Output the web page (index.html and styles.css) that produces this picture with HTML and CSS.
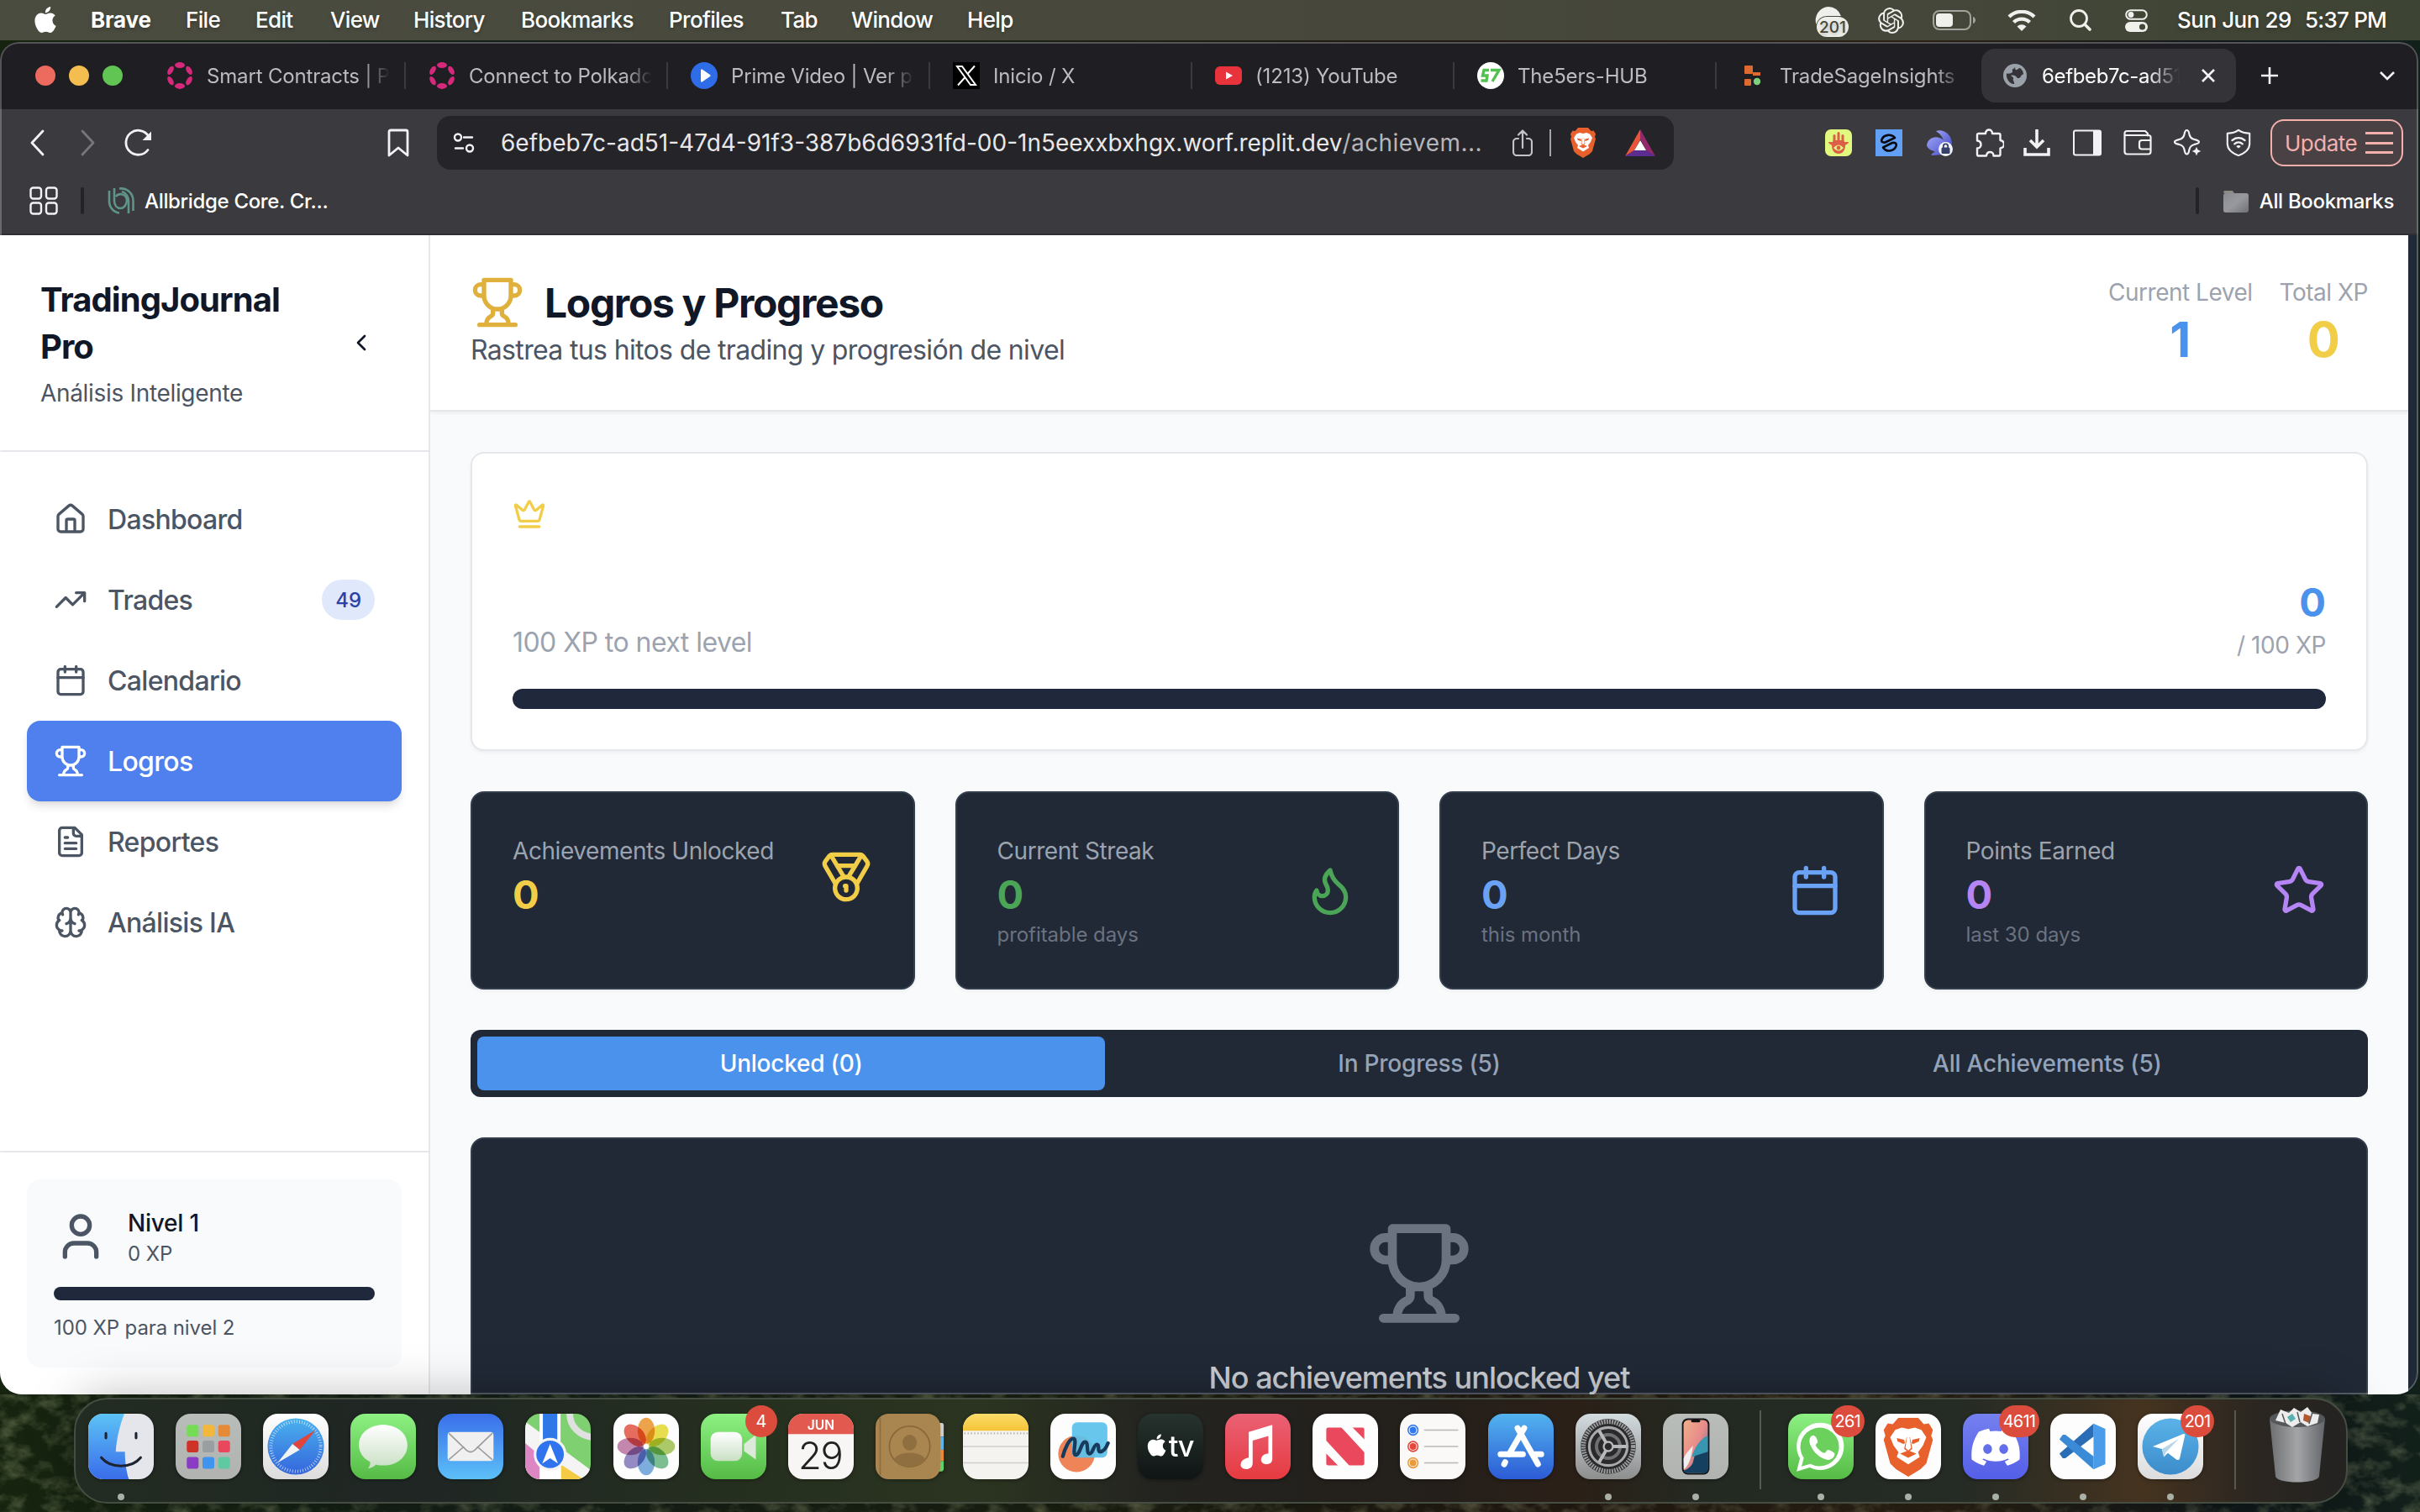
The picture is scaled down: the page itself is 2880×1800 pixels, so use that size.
FILE: index.html
```html
<!DOCTYPE html>
<html lang="es">
<head>
<meta charset="utf-8">
<title>Logros y Progreso</title>
<link rel="stylesheet" href="styles.css">
</head>
<body>
<svg class="defs" aria-hidden="true">
  <defs>
    <linearGradient id="g-finder" x1="0" y1="0" x2="0" y2="1"><stop offset="0" stop-color="#5cc3f5"/><stop offset="1" stop-color="#3a6cea"/></linearGradient>
    <linearGradient id="g-white" x1="0" y1="0" x2="0" y2="1"><stop offset="0" stop-color="#ffffff"/><stop offset="1" stop-color="#dcdcdc"/></linearGradient>
    <linearGradient id="g-safari" x1="0" y1="0" x2="0" y2="1"><stop offset="0" stop-color="#4ab1ee"/><stop offset="1" stop-color="#3465dc"/></linearGradient>
    <linearGradient id="g-green" x1="0" y1="0" x2="0" y2="1"><stop offset="0" stop-color="#8df183"/><stop offset="1" stop-color="#55bb45"/></linearGradient>
    <linearGradient id="g-bubble" x1="0" y1="0" x2="0" y2="1"><stop offset="0" stop-color="#ffffff"/><stop offset="1" stop-color="#c9dfc4"/></linearGradient>
    <linearGradient id="g-mail" x1="0" y1="0" x2="0" y2="1"><stop offset="0" stop-color="#3a6fea"/><stop offset="1" stop-color="#5cc0f8"/></linearGradient>
    <linearGradient id="g-red" x1="0" y1="0" x2="0" y2="1"><stop offset="0" stop-color="#ea6175"/><stop offset="1" stop-color="#e63a40"/></linearGradient>
    <linearGradient id="g-store" x1="0" y1="0" x2="0" y2="1"><stop offset="0" stop-color="#52b3ee"/><stop offset="1" stop-color="#2c5bd6"/></linearGradient>
    <linearGradient id="g-tv" x1="0" y1="0" x2="0" y2="1"><stop offset="0" stop-color="#27332f"/><stop offset="1" stop-color="#0f1414"/></linearGradient>
    <linearGradient id="g-gray" x1="0" y1="0" x2="0" y2="1"><stop offset="0" stop-color="#b9bdb9"/><stop offset="1" stop-color="#b0b3b0"/></linearGradient>
    <linearGradient id="g-set" x1="0" y1="0" x2="0" y2="1"><stop offset="0" stop-color="#d3dce0"/><stop offset="1" stop-color="#8d8d8d"/></linearGradient>
    <linearGradient id="g-tg" x1="0" y1="0" x2="0" y2="1"><stop offset="0" stop-color="#5ab3e8"/><stop offset="1" stop-color="#3c8ccb"/></linearGradient>
    <linearGradient id="g-brave" x1="0" y1="0" x2="1" y2="0"><stop offset="0" stop-color="#e0713a"/><stop offset="1" stop-color="#d9472f"/></linearGradient>
    <linearGradient id="g-disc" x1="0" y1="0" x2="0" y2="1"><stop offset="0" stop-color="#7580ef"/><stop offset="1" stop-color="#545fe8"/></linearGradient>
    <linearGradient id="g-notes" x1="0" y1="0" x2="0" y2="1"><stop offset="0" stop-color="#fbdc68"/><stop offset="1" stop-color="#f5c437"/></linearGradient>
    <linearGradient id="g-trash" x1="0" y1="0" x2="1" y2="0"><stop offset="0" stop-color="#6c6e70"/><stop offset=".5" stop-color="#a3a5a7"/><stop offset="1" stop-color="#63666a"/></linearGradient>
    <linearGradient id="g-bunny" x1="0" y1="0" x2="1" y2="1"><stop offset="0" stop-color="#9aa0f5"/><stop offset="1" stop-color="#4a50c8"/></linearGradient>
    <linearGradient id="g-phone" x1="0" y1="0" x2="1" y2="1"><stop offset="0" stop-color="#f0b08a"/><stop offset=".5" stop-color="#e88a8a"/><stop offset="1" stop-color="#2a7a96"/></linearGradient>
    <linearGradient id="g-folder" x1="0" y1="0" x2="1" y2="1"><stop offset="0" stop-color="#8b8c91"/><stop offset=".5" stop-color="#98999e"/><stop offset="1" stop-color="#707176"/></linearGradient>
    <clipPath id="clip-app"><rect width="100" height="100" rx="23"/></clipPath>
    <filter id="foliage" x="0" y="0" width="100%" height="100%"><feTurbulence type="fractalNoise" baseFrequency=".035 .05" numOctaves="4" seed="7"/><feColorMatrix values="0 0 0 0 .38  0 0 0 0 .42  0 0 0 0 .22  1.9 0 0 0 -.85"/></filter>
    <symbol id="trophy" viewBox="0 0 24 24"><path d="M6 9H4.5a2.5 2.5 0 0 1 0-5H6M18 9h1.5a2.5 2.5 0 0 0 0-5H18M4 22h16M10 14.66V17c0 .55-.47.98-.97 1.21C7.85 18.75 7 20.24 7 22M14 14.66V17c0 .55.47.98.97 1.21C16.15 18.75 17 20.24 17 22M18 2H6v7a6 6 0 0 0 12 0V2Z"/></symbol>
    <symbol id="calendar" viewBox="0 0 24 24"><path d="M8 2v4M16 2v4M3 10h18"/><rect x="3" y="4" width="18" height="18" rx="2"/></symbol>
    <symbol id="apple" viewBox="0 0 24 24"><path d="M12.152 6.896c-.948 0-2.415-1.078-3.96-1.04-2.04.027-3.91 1.183-4.961 3.014-2.117 3.675-.546 9.103 1.519 12.09 1.013 1.454 2.208 3.09 3.792 3.039 1.52-.065 2.09-.987 3.935-.987 1.831 0 2.35.987 3.96.948 1.637-.026 2.676-1.48 3.676-2.948 1.156-1.688 1.636-3.325 1.662-3.415-.039-.013-3.182-1.221-3.22-4.857-.026-3.04 2.48-4.494 2.597-4.559-1.429-2.09-3.623-2.324-4.39-2.376-2-.156-3.675 1.09-4.61 1.09zM15.53 3.83c.843-1.012 1.4-2.427 1.245-3.83-1.207.052-2.662.805-3.532 1.818-.78.896-1.454 2.338-1.273 3.714 1.338.104 2.715-.688 3.559-1.701"/></symbol>
    <symbol id="polkadot" viewBox="0 0 32 32"><g fill="#d6297b"><ellipse cx="16" cy="3.6" rx="6" ry="3.5"/><ellipse cx="16" cy="28.4" rx="6" ry="3.5"/><ellipse cx="5" cy="9.8" rx="3" ry="5.6" transform="rotate(30 5 9.8)"/><ellipse cx="27" cy="22.2" rx="3" ry="5.6" transform="rotate(30 27 22.2)"/><ellipse cx="27" cy="9.8" rx="3" ry="5.6" transform="rotate(-30 27 9.8)"/><ellipse cx="5" cy="22.2" rx="3" ry="5.6" transform="rotate(-30 5 22.2)"/></g></symbol>
    <symbol id="lion" viewBox="0 0 64 72"><path class="lion-shape" d="M20 0h24l7 8 6-1 5 8-2 7 2 5-8 29-7 7-15 9-15-9-7-7L2 27l2-5-2-7 5-8 6 1z"/><path fill="#fff" d="M32 14l8-2 8 3 6 9-4 10-6 8 2 6-14 9-14-9 2-6-6-8-4-10 6-9 8-3z"/><path class="lion-shape" d="M18 25l9 2 1 4-2 1-7-3zM46 25l-9 2-1 4 2 1 7-3zM30 24h4l3 14-5 4-5-4zM22 44l10-4 10 4-10 5z"/><path fill="#fff" d="M30.500 24h3l2 13-3.500 3-3.500-3z"/></symbol>
  </defs>
</svg>

<header class="menubar">
  <svg class="menubar-apple" viewBox="0 0 24 24"><use href="#apple"/></svg>
  <nav class="menus">
    <b>Brave</b><span>File</span><span>Edit</span><span>View</span><span>History</span><span>Bookmarks</span><span>Profiles</span><span>Tab</span><span>Window</span><span>Help</span>
  </nav>
  <div class="status">
    <svg class="st-badge" viewBox="0 0 40 36"><path d="M16 0a16 16 0 0 1 15 11H14A13 13 0 0 0 1.500 21 16 16 0 0 1 16 0z"/><rect x="2" y="12" width="38" height="24" rx="12"/><text x="21" y="30.500">201</text></svg>
    <svg class="st-gpt" viewBox="0 0 24 24"><path d="M22.2819 9.8211a5.9847 5.9847 0 0 0-.5157-4.9108 6.0462 6.0462 0 0 0-6.5098-2.9A6.0651 6.0651 0 0 0 4.9807 4.1818a5.9847 5.9847 0 0 0-3.9977 2.9 6.0462 6.0462 0 0 0 .7427 7.0966 5.98 5.98 0 0 0 .511 4.9107 6.051 6.051 0 0 0 6.5146 2.9001A5.9847 5.9847 0 0 0 13.2599 24a6.0557 6.0557 0 0 0 5.7718-4.2058 5.9894 5.9894 0 0 0 3.9977-2.9001 6.0557 6.0557 0 0 0-.7475-7.0729zm-9.022 12.6081a4.4755 4.4755 0 0 1-2.8764-1.0408l.1419-.0804 4.7783-2.7582a.7948.7948 0 0 0 .3927-.6813v-6.7369l2.02 1.1686a.071.071 0 0 1 .038.052v5.5826a4.504 4.504 0 0 1-4.4945 4.4944zm-9.6607-4.1254a4.4708 4.4708 0 0 1-.5346-3.0137l.142.0852 4.783 2.7582a.7712.7712 0 0 0 .7806 0l5.8428-3.3685v2.3324a.0804.0804 0 0 1-.0332.0615L9.74 19.9502a4.4992 4.4992 0 0 1-6.1408-1.6464zM2.3408 7.8956a4.485 4.485 0 0 1 2.3655-1.9728V11.6a.7664.7664 0 0 0 .3879.6765l5.8144 3.3543-2.0201 1.1685a.0757.0757 0 0 1-.071 0l-4.8303-2.7865A4.504 4.504 0 0 1 2.3408 7.872zm16.5963 3.8558L13.1038 8.364 15.1192 7.2a.0757.0757 0 0 1 .071 0l4.8303 2.7913a4.4944 4.4944 0 0 1-.6765 8.1042v-5.6772a.79.79 0 0 0-.407-.667zm2.0107-3.0231l-.142-.0852-4.7735-2.7818a.7759.7759 0 0 0-.7854 0L9.409 9.2297V6.8974a.0662.0662 0 0 1 .0284-.0615l4.8303-2.7866a4.4992 4.4992 0 0 1 6.6802 4.66zM8.3065 12.863l-2.02-1.1638a.0804.0804 0 0 1-.038-.0567V6.0742a4.4992 4.4992 0 0 1 7.3757-3.4537l-.142.0805L8.704 5.459a.7948.7948 0 0 0-.3927.6813zm1.0976-2.3654l2.602-1.4998 2.6069 1.4998v2.9994l-2.5974 1.4997-2.6067-1.4997Z"/></svg>
    <svg class="st-batt" viewBox="0 0 51 24"><rect x="1" y="1" width="44" height="22" rx="7" fill="none" stroke="#fff" stroke-opacity=".5" stroke-width="2"/><rect x="4" y="4" width="20" height="16" rx="4"/><path d="M48 8c4 1 4 7 0 8z" opacity=".55"/></svg>
    <svg class="st-wifi" viewBox="0 0 34 25"><path d="M17 25l-5.500-5.500a8 8 0 0 1 11 0z"/><path d="M7.500 14.500a13.500 13.500 0 0 1 19 0M2 8a21.500 21.500 0 0 1 30 0" fill="none" stroke="#efefec" stroke-width="4.400"/></svg>
    <svg class="st-search" viewBox="0 0 26 26"><g fill="none" stroke="#efefec" stroke-width="2.800" stroke-linecap="round"><circle cx="11" cy="11" r="9.500"/><path d="M18 18l6 6" stroke-width="3.600"/></g></svg>
    <svg class="st-cc" viewBox="0 0 27 27"><rect x="1.200" y="1.200" width="24.600" height="10.600" rx="5.300" fill="none" stroke="#efefec" stroke-width="2"/><circle cx="7" cy="6.500" r="3.400"/><rect y="15" width="27" height="12" rx="6"/><circle cx="20.500" cy="21" r="3.600" fill="#434738"/></svg>
    <span class="st-date">Sun Jun 29</span><span class="st-time">5:37 PM</span>
  </div>
</header>

<main class="window">
  <div class="tabstrip">
    <div class="lights"><i class="red"></i><i class="amber"></i><i class="green"></i></div>
    <div class="tab"><svg viewBox="0 0 32 32"><use href="#polkadot"/></svg><span>Smart Contracts | P</span></div>
    <div class="tab"><svg viewBox="0 0 32 32"><use href="#polkadot"/></svg><span>Connect to Polkadc</span></div>
    <div class="tab"><svg viewBox="0 0 32 32"><circle cx="16" cy="16" r="16" fill="#2f6ce8"/><path d="M12 9.500c0-1 .8-1.400 1.600-.9L23 15c.8.600.8 1.500 0 2l-9.400 6.500c-.8.500-1.600 0-1.600-.900z" fill="#fff"/></svg><span>Prime Video | Ver p</span></div>
    <div class="tab"><svg viewBox="0 0 32 32"><path fill="#000" d="M0 0h32v32H0z"/><path fill="none" stroke="#fff" stroke-width="2" d="M5 5h6l16 22h-6zM26 4.500L17.500 14M14.500 18L6 27.500"/></svg><span>Inicio / X</span></div>
    <div class="tab"><svg viewBox="0 0 32 32"><rect x="0" y="5" width="32" height="22" rx="6" fill="#e8333c"/><path d="M13 11.500l8 4.500-8 4.500z" fill="#fff"/></svg><span>(1213) YouTube</span></div>
    <div class="tab"><svg viewBox="0 0 32 32"><circle cx="16" cy="16" r="16" fill="#fff"/><path d="M14 9.500H8L6.500 16H12l-1 6H4.500M16 9.500h10L18 23" fill="none" stroke="#52c152" stroke-width="3.400"/></svg><span>The5ers-HUB</span></div>
    <div class="tab last"><svg viewBox="0 0 32 32"><g fill="#dd6a30"><rect x="6" y="4" width="10" height="10" rx="1"/><rect x="16" y="12" width="9" height="4"/><rect x="6" y="20" width="8" height="8" rx="1"/></g><circle cx="21" cy="23" r="4.200" fill="#7ed07c"/></svg><span>TradeSageInsights</span></div>
    <div class="tab active"><svg viewBox="0 0 28 28"><circle cx="14" cy="14" r="14" fill="#9ba1a8"/><path d="M14 4c-1 2-4 2-3 4.500S7 12 4 11.500C3 17 7 24 13 24c1-2-2-4-1-6s-2-3-3-4c3-1 6 0 7 2s4 1 5-1 2-3 3-2c0-3-1-6-4-8-2 0-3 3-5 2s0-2-1-3z" fill="#343338"/></svg><span>6efbeb7c-ad51</span><svg class="close" viewBox="0 0 16 16"><path d="M1 1l14 14M15 1L1 15"/></svg></div>
    <svg class="plus" viewBox="0 0 22 22"><path d="M11 1v20M1 11h20"/></svg>
    <svg class="chev" viewBox="0 0 20 12"><path d="M2 2l8 8 8-8"/></svg>
  </div>

  <div class="toolbar">
    <svg class="ic back" viewBox="0 0 18 32"><path d="M16 2L3 16l13 14"/></svg>
    <svg class="ic fwd" viewBox="0 0 18 32"><path d="M2 2l13 14L2 30"/></svg>
    <svg class="ic reload" viewBox="0 0 36 34"><path d="M29 25.500A14.500 14.500 0 1 1 30 9.500"/><path d="M33 3.500V14H22.500z" fill="#f2f2f4" stroke="none"/></svg>
    <svg class="ic bm" viewBox="0 0 26 34"><path d="M2 4a2 2 0 0 1 2-2h18a2 2 0 0 1 2 2v28l-11-9-11 9z"/></svg>
    <div class="urlbar">
      <svg class="ic tune" viewBox="0 0 26 24"><g stroke-width="2.400"><circle cx="6" cy="5.500" r="4"/><path d="M13 5.500h10M3 18.500h9"/><circle cx="20" cy="18.500" r="4"/></g></svg>
      <span class="url">6efbeb7c-ad51-47d4-91f3-387b6d6931fd-00-1n5eexxbxhgx.worf.replit.dev<em>/achievem...</em></span>
      <svg class="ic share" viewBox="0 0 24 32"><path d="M7 11H5a4 4 0 0 0-4 4v12a4 4 0 0 0 4 4h14a4 4 0 0 0 4-4V15a4 4 0 0 0-4-4h-2M12 22V2M7 6.500L12 1.500l5 5"/></svg>
      <i class="sep"></i>
      <svg class="lion" viewBox="0 0 64 72"><use href="#lion"/></svg>
      <svg class="bat" viewBox="0 0 36 32"><path d="M18 0L0 32l11-7 7-13z" fill="#e8553a"/><path d="M18 0l18 32-11-7-7-13z" fill="#93296b"/><path d="M0 32h36l-11-7H11z" fill="#5c2d91"/><path d="M18 13l7 12H11z" fill="#fff"/></svg>
    </div>
    <div class="exts">
      <span><svg viewBox="0 0 32 32"><rect width="32" height="32" rx="7" fill="#e1f97f"/><g fill="#dc5f48"><rect x="9.500" y="6" width="3" height="10" rx="1.500"/><rect x="14.500" y="3" width="3" height="12" rx="1.500"/><rect x="19.500" y="6" width="3" height="10" rx="1.500"/><path d="M4 15h5l1-2h12l1 2h5c0 2-3 3-4 4 0 6-3 10-8 10s-8-4-8-10c-1-1-4-2-4-4z"/></g><path d="M10 22q6-7 12 0-6 7-12 0z" fill="#e1f97f"/><circle cx="16" cy="22" r="2.400" fill="#dc5f48"/></svg></span>
      <span><svg viewBox="0 0 32 32"><path fill="#62a0f5" d="M0 0h32v32H0z"/><path d="M23 10C19 5 10 6 7.500 12c-1 3 1 4 4 3.500zM9 21.500C13 28 22 26 24.500 20c1-3.500-1-4.500-4.500-4z" fill="none" stroke="#0a0a12" stroke-width="2.600" stroke-linejoin="round"/></svg></span>
      <span><svg viewBox="0 0 32 32"><path d="M12 2C19-1 30 4 31 16l-1 4-9-6C20 8 16 5 12 2z" fill="url(#g-bunny)"/><path d="M1 19C2 10 12 6 20 12l8 8-8 10-12 1c-3 0-1-3 3-4-3-2-9-3-10-8z" fill="url(#g-bunny)"/><circle cx="23.500" cy="23.500" r="8.500" fill="#f1f3f8"/><rect x="18.500" y="21.500" width="10" height="7.500" rx="1.500" fill="#36406a"/><path d="M20.800 22v-2a2.700 2.700 0 0 1 5.400 0v2" fill="none" stroke="#36406a" stroke-width="1.800"/></svg></span>
      <span><svg class="ic wide" viewBox="0 0 34 34"><path d="M4 6h8c0-6 8-6 8 0h8a1.500 1.500 0 0 1 1.500 1.500V14c6 1 6 8.500 0 9.500V31a1.500 1.500 0 0 1-1.500 1.500h-6.500c0-6-8-6-8.500 0H4A1.500 1.500 0 0 1 2 31v-7.500c6 0 6-8.500 0-9V7.500A1.500 1.500 0 0 1 4 6z" stroke-width="2.400"/></svg></span>
      <span class="dl"><svg viewBox="0 0 32 32"><path d="M16 0v20M8 13l8 8 8-8M2 22v8h28v-8" fill="none" stroke="#f2f2f4" stroke-width="3.600"/></svg></span>
      <span><svg class="wide" viewBox="0 0 34 31"><rect x="1" y="1" width="32" height="29" rx="2" fill="none" stroke="#f2f2f4" stroke-width="2"/><path fill="#f2f2f4" d="M24 1h9v29h-9z"/></svg></span>
      <span><svg class="ic wide" viewBox="0 0 34 31"><path d="M29 7V4.500L26 1.500H4a2.500 2.500 0 0 0-2.500 2.500v22A3 3 0 0 0 4.500 29h25a3 3 0 0 0 3-3V9a2.500 2.500 0 0 0-2.500-2.500H2M32 12.500H22a3 3 0 0 0-3 3V20a3 3 0 0 0 3 3h10" stroke-width="2.200"/></svg></span>
      <span><svg class="ic wide" viewBox="0 0 34 34"><path d="M15.500 2c1.800 0 2.500 2 3 5 .7 3.500 2 5 6 6 3 .7 5.500 1.200 5.500 3s-2.500 2.300-5.500 3c-4 1-5.300 2.500-6 6-.5 3-1.200 5.500-3 5.500s-2.500-2.500-3-5.500c-.7-3.500-2-5-6-6-3-.7-5.500-1.200-5.500-3s2.500-2.300 5.500-3c4-1 5.300-2.500 6-6 .5-3 1.200-5 3-5z" stroke-width="2.200"/><path d="M27 20l2 4.500 5 2.500-5 2.500-2 5-2-5-5-2.500 5-2.500z" fill="#f2f2f4" stroke="#3b3a3f" stroke-width="1.500"/></svg></span>
      <span><svg class="ic wide" viewBox="0 0 34 36"><path d="M17 2c4 3 9 4 14 4v13c0 7-6 12-14 15C9 31 3 26 3 19V6c5 0 10-1 14-4z" stroke-width="2.200"/><path d="M9 15a11.500 11.500 0 0 1 16 0M12 19.500a7 7 0 0 1 10 0" stroke-width="2.400"/><path d="M14 22.500a4 4 0 0 1 6 0l-3 2.500z" fill="#f2f2f4" stroke="none"/></svg></span>
    </div>
    <div class="update"><span>Update</span><i></i></div>
  </div>

  <div class="bookmarks">
    <svg class="ic grid" viewBox="0 0 34 34"><g stroke-width="2.400"><rect x="1.500" y="1.500" width="12.500" height="13" rx="3"/><rect x="20" y="1.500" width="12.500" height="13" rx="3"/><rect x="1.500" y="19.500" width="12.500" height="13" rx="3"/><rect x="20" y="19.500" width="12.500" height="13" rx="3"/></g></svg>
    <i class="vsep"></i>
    <svg class="allb" viewBox="0 0 32 32"><g fill="none" stroke="#5f9489" stroke-width="2.600"><path d="M2 4v12a14 14 0 0 0 12 14.500M8 1v15c0 12 14 12 15 0 0-8-9-10-13-5"/><path d="M14 1.500A14.500 14.500 0 0 1 30.500 16v12M17 5a12 12 0 0 1 8 11v15"/></g></svg>
    <span class="bm-name">Allbridge Core. Cr...</span>
    <i class="vsep right"></i>
    <svg class="folder" viewBox="0 0 30 26"><path d="M0 2a2 2 0 0 1 2-2h9l2 3H1z" fill="#8a8b84"/><rect y="3" width="30" height="23" rx="3" fill="url(#g-folder)"/></svg>
    <span class="all">All Bookmarks</span>
  </div>

  <div class="app">
    <aside class="sidebar">
      <div class="brand">
        <div><h1>TradingJournal<br>Pro</h1><p>Análisis Inteligente</p></div>
        <svg class="lu s32" viewBox="0 0 24 24"><path d="m15 18-6-6 6-6"/></svg>
      </div>
      <nav class="nav">
        <a><svg class="lu s40" viewBox="0 0 24 24"><path d="M15 21v-8a1 1 0 0 0-1-1h-4a1 1 0 0 0-1 1v8M3 10a2 2 0 0 1 .709-1.528l7-5.999a2 2 0 0 1 2.582 0l7 5.999A2 2 0 0 1 21 10v9a2 2 0 0 1-2 2H5a2 2 0 0 1-2-2z"/></svg><span>Dashboard</span></a>
        <a><svg class="lu s40" viewBox="0 0 24 24"><path d="M22 7l-8.500 8.500-5-5L2 17M16 7h6v6"/></svg><span>Trades</span><b>49</b></a>
        <a><svg class="lu s40" viewBox="0 0 24 24"><use href="#calendar"/></svg><span>Calendario</span></a>
        <a class="on"><svg class="lu s40" viewBox="0 0 24 24"><use href="#trophy"/></svg><span>Logros</span></a>
        <a><svg class="lu s40" viewBox="0 0 24 24"><path d="M15 2H6a2 2 0 0 0-2 2v16a2 2 0 0 0 2 2h12a2 2 0 0 0 2-2V7ZM14 2v4a2 2 0 0 0 2 2h4M10 9H8M16 13H8M16 17H8"/></svg><span>Reportes</span></a>
        <a><svg class="lu s40" viewBox="0 0 24 24"><path d="M12 5a3 3 0 1 0-5.997.125 4 4 0 0 0-2.526 5.770 4 4 0 0 0 .556 6.588A4 4 0 1 0 12 18ZM12 5a3 3 0 1 1 5.997.125 4 4 0 0 1 2.526 5.770 4 4 0 0 1-.556 6.588A4 4 0 1 1 12 18ZM15 13a4.500 4.500 0 0 1-3-4 4.500 4.500 0 0 1-3 4M17.599 6.500a3 3 0 0 0 .399-1.375M6.003 5.125A3 3 0 0 0 6.401 6.500M3.477 10.896a4 4 0 0 1 .585-.396M19.938 10.500a4 4 0 0 1 .585.396M6 18a4 4 0 0 1-1.967-.516M19.967 17.484A4 4 0 0 1 18 18"/></svg><span>Análisis IA</span></a>
      </nav>
      <div class="profile"><div class="pcard">
        <div class="prow"><svg class="lu s64" viewBox="0 0 24 24"><path d="M19 21v-2a4 4 0 0 0-4-4H9a4 4 0 0 0-4 4v2"/><circle cx="12" cy="7" r="4"/></svg><div><strong>Nivel 1</strong><small>0 XP</small></div></div>
        <div class="bar"></div>
        <small>100 XP para nivel 2</small>
      </div></div>
    </aside>

    <section class="page">
      <header class="phead">
        <div><div class="ptitle"><svg class="lu s64" viewBox="0 0 24 24"><use href="#trophy"/></svg><h2>Logros y Progreso</h2></div><p>Rastrea tus hitos de trading y progresión de nivel</p></div>
        <div class="figures"><div><span>Current Level</span><b class="blue">1</b></div><div><span>Total XP</span><b class="yellow">0</b></div></div>
      </header>
      <div class="content">
        <div class="level">
          <svg class="lu s40 crown" viewBox="0 0 24 24"><path d="M11.562 3.266a.5.5 0 0 1 .876 0L15.390 8.870a1 1 0 0 0 1.516.294L21.183 5.500a.5.5 0 0 1 .798.519l-2.834 10.246a1 1 0 0 1-.956.734H5.810a1 1 0 0 1-.957-.734L2.020 6.020a.5.5 0 0 1 .798-.519l4.276 3.664a1 1 0 0 0 1.516-.294zM5 21h14"/></svg>
          <div class="lrow"><p>100 XP to next level</p><div><b>0</b><span>/ 100 XP</span></div></div>
          <div class="bar big"></div>
        </div>
        <div class="stats">
          <div class="stat y"><div><span>Achievements Unlocked</span><b>0</b></div><svg class="lu s64" viewBox="0 0 24 24"><path d="M7.210 15 2.660 7.140a2 2 0 0 1 .130-2.200L4.400 2.800A2 2 0 0 1 6 2h12a2 2 0 0 1 1.600.8l1.600 2.140a2 2 0 0 1 .140 2.200L16.790 15M11 12 5.120 2.200M13 12l5.880-9.800M8 7h8M12 18v-2h-.5"/><circle cx="12" cy="17" r="5"/></svg></div>
          <div class="stat g"><div><span>Current Streak</span><b>0</b><small>profitable days</small></div><svg class="lu s64" viewBox="0 0 24 24"><path d="M8.500 14.500A2.500 2.500 0 0 0 11 12c0-1.380-.5-2-1-3-1.072-2.143-.224-4.054 2-6 .5 2.500 2 4.900 4 6.500 2 1.600 3 3.500 3 5.500a7 7 0 1 1-14 0c0-1.153.433-2.294 1-3a2.500 2.500 0 0 0 2.500 2.500z"/></svg></div>
          <div class="stat b"><div><span>Perfect Days</span><b>0</b><small>this month</small></div><svg class="lu s64" viewBox="0 0 24 24"><use href="#calendar"/></svg></div>
          <div class="stat p"><div><span>Points Earned</span><b>0</b><small>last 30 days</small></div><svg class="lu s64" viewBox="0 0 24 24"><path d="M11.525 2.295a.53.53 0 0 1 .950 0l2.310 4.679a2.123 2.123 0 0 0 1.595 1.160l5.166.756a.53.53 0 0 1 .294.904l-3.736 3.638a2.123 2.123 0 0 0-.611 1.878l.882 5.140a.53.53 0 0 1-.771.560l-4.618-2.428a2.122 2.122 0 0 0-1.973 0L6.396 21.010a.53.53 0 0 1-.770-.560l.881-5.139a2.122 2.122 0 0 0-.611-1.879L2.160 9.795a.53.53 0 0 1 .294-.906l5.165-.755a2.122 2.122 0 0 0 1.597-1.160z"/></svg></div>
        </div>
        <div class="segs"><span class="on">Unlocked (0)</span><span>In Progress (5)</span><span>All Achievements (5)</span></div>
        <div class="empty"><svg class="lu s128" viewBox="0 0 24 24"><use href="#trophy"/></svg><h3>No achievements unlocked yet</h3></div>
      </div>
    </section>
  </div>
</main>

<svg class="wall" width="2880" height="140"><rect width="2880" height="140" filter="url(#foliage)"/></svg>

<footer class="dock">
  <div class="app-ic run"><svg viewBox="0 0 100 100"><g clip-path="url(#clip-app)"><path fill="#e4e6ec" d="M0 0h100v100H0z"/><path fill="url(#g-finder)" d="M0 0h55C48 18 43 40 42 58h14c0 15 2 30 6 42H0z"/></g><g fill="none" stroke="#1d2430" stroke-width="4" stroke-linecap="round"><path d="M27 30v7M73 30v7M20 67c14 17 46 17 60 0"/></g></svg></div>
  <div class="app-ic"><svg viewBox="0 0 100 100"><rect width="100" height="100" rx="23" fill="url(#g-gray)"/><rect x="17" y="17" width="18" height="18" rx="4" fill="#74dc55"/><rect x="41" y="17" width="18" height="18" rx="4" fill="#f1b83c"/><rect x="65" y="17" width="18" height="18" rx="4" fill="#e58a36"/><rect x="17" y="41" width="18" height="18" rx="4" fill="#cf3328"/><rect x="41" y="41" width="18" height="18" rx="4" fill="#999ea2"/><rect x="65" y="41" width="18" height="18" rx="4" fill="#e9485c"/><rect x="17" y="66" width="18" height="18" rx="4" fill="#8a3cc4"/><rect x="41" y="66" width="18" height="18" rx="4" fill="#3f94f0"/><rect x="65" y="66" width="18" height="18" rx="4" fill="#5fc9a2"/></svg></div>
  <div class="app-ic"><svg viewBox="0 0 100 100"><rect width="100" height="100" rx="23" fill="url(#g-white)"/><circle cx="50" cy="50" r="43" fill="url(#g-safari)"/><circle cx="50" cy="50" r="38" fill="none" stroke="#fff" stroke-opacity=".75" stroke-width="5" stroke-dasharray="1 3"/><path d="M80 25L56 55 45 46z" fill="#e0443a"/><path d="M22 75l23-29 11 9z" fill="#f3f3f3"/></svg></div>
  <div class="app-ic"><svg viewBox="0 0 100 100"><rect width="100" height="100" rx="23" fill="url(#g-green)"/><path d="M50 17c21 0 37 13 37 31S71 79 50 79c-4 0-8-.5-11-1.500-3 3-7 5.500-12 6 2-3 4-6 3-10C19 68 13 58 13 48c0-18 16-31 37-31z" fill="url(#g-bubble)"/></svg></div>
  <div class="app-ic"><svg viewBox="0 0 100 100"><rect width="100" height="100" rx="23" fill="url(#g-mail)"/><rect x="15" y="28" width="70" height="44" rx="5" fill="#f0f0f0"/><path d="M17 30l27 26q6 5 12 0l27-26M17 70l23-20M83 70L60 50" fill="none" stroke="#9a9a9a" stroke-width="2"/></svg></div>
  <div class="app-ic"><svg viewBox="0 0 100 100"><g clip-path="url(#clip-app)"><path fill="#7fd070" d="M0 0h100v100H0z"/><path fill="#f4f4f4" d="M0 12l100 74v14H0z"/><path fill="#de86c4" d="M0 45l24 20v35H0z"/><path fill="#f5cb45" d="M55 78l34 22H55z"/><path fill="#fff" d="M22 0h32v100H22z"/><path fill="#2f78e8" d="M27 0h22v50H27z"/><path d="M68 0c0 18 14 34 36 36" fill="none" stroke="#e0e0e0" stroke-width="10"/></g><circle cx="38" cy="62" r="23" fill="#2f74ee" stroke="#f4f4f4" stroke-width="4"/><path d="M38 46l12 30-12-8-12 8z" fill="#fff"/></svg></div>
  <div class="app-ic"><svg viewBox="0 0 100 100"><rect width="100" height="100" rx="23" fill="#fdfdfd"/><g class="petals"><ellipse cx="50" cy="26" rx="13" ry="20" fill="#ee9a38"/><ellipse cx="50" cy="26" rx="13" ry="20" fill="#e8dc3c" transform="rotate(45 50 50)"/><ellipse cx="50" cy="26" rx="13" ry="20" fill="#a4c65a" transform="rotate(90 50 50)"/><ellipse cx="50" cy="26" rx="13" ry="20" fill="#6fb886" transform="rotate(135 50 50)"/><ellipse cx="50" cy="26" rx="13" ry="20" fill="#6fa6dc" transform="rotate(180 50 50)"/><ellipse cx="50" cy="26" rx="13" ry="20" fill="#8b80c0" transform="rotate(225 50 50)"/><ellipse cx="50" cy="26" rx="13" ry="20" fill="#bf7aa6" transform="rotate(270 50 50)"/><ellipse cx="50" cy="26" rx="13" ry="20" fill="#e65e4c" transform="rotate(315 50 50)"/></g></svg></div>
  <div class="app-ic"><svg viewBox="0 0 100 100"><rect width="100" height="100" rx="23" fill="url(#g-green)"/><rect x="15" y="28" width="48" height="44" rx="11" fill="url(#g-bubble)"/><path d="M66 46l18-14v38L66 57z" fill="#dcebd9"/></svg><em class="badge">4</em></div>
  <div class="app-ic"><svg viewBox="0 0 100 100"><g clip-path="url(#clip-app)"><path fill="#f8f6f5" d="M0 0h100v100H0z"/><path fill="#e2594f" d="M0 0h100v31H0z"/></g><text class="cal-m" x="50" y="24">JUN</text><text class="cal-d" x="49" y="84">29</text></svg></div>
  <div class="app-ic"><svg viewBox="0 0 100 100"><path fill="#ccc" d="M90 14h11a3 3 0 0 1 3 3v18H90z"/><path fill="#5eb4ea" d="M90 35h14v20H90z"/><path fill="#e8893a" d="M90 55h14v17H90z"/><path fill="#5fd06a" d="M90 72h14v12a4 4 0 0 1-4 4H90z"/><rect width="99" height="100" rx="20" fill="#a98550"/><path d="M7 6v88" stroke="#8c6c3e" stroke-width="2"/><circle cx="52" cy="50" r="31" fill="none" stroke="#876638" stroke-width="2"/><g fill="#8f6e40"><ellipse cx="52" cy="44" rx="11" ry="12"/><path d="M28 70c6-14 42-14 48 0-10 15-38 15-48 0z"/></g></svg></div>
  <div class="app-ic"><svg viewBox="0 0 100 100"><g clip-path="url(#clip-app)"><path fill="#f4f3ef" d="M0 0h100v100H0z"/><path fill="url(#g-notes)" d="M0 0h100v26H0z"/><path d="M0 50h100M0 75h100" stroke="#cfcfcc" stroke-width="2"/><path d="M2 30h98" stroke="#b9b9b5" stroke-width="3" stroke-dasharray="2 3"/></g></svg></div>
  <div class="app-ic"><svg viewBox="0 0 100 100"><rect width="100" height="100" rx="23" fill="#fdfdfd"/><circle cx="40" cy="61" r="28" fill="#ee8458"/><rect x="33" y="13" width="54" height="54" rx="8" fill="#5bc1ec" fill-opacity=".92"/><path d="M19 65c3-12 10-27 16-27 7 0-3 25 4 25 6 0 8-20 14-20 6 0 1 18 7 18 5 0 6-14 11-14 5 0 0 11 5 11 5 0 9-5 12-13" fill="none" stroke="#173b5c" stroke-width="5.500" stroke-linecap="round"/></svg></div>
  <div class="app-ic"><svg viewBox="0 0 100 100"><rect width="100" height="100" rx="23" fill="url(#g-tv)"/><svg x="12" y="30" width="34" height="36" viewBox="0 0 24 24" fill="#fff"><use href="#apple"/></svg><text class="tv" x="66" y="66">tv</text></svg></div>
  <div class="app-ic"><svg viewBox="0 0 100 100"><rect width="100" height="100" rx="23" fill="url(#g-red)"/><path d="M36 28l36-11v52c0 12-19 10-17 0 1-6 7-8 11-8V34l-24 7v35c0 12-21 11-18 0 1-6 8-8 12-9z" fill="#fff"/></svg></div>
  <div class="app-ic"><svg viewBox="0 0 100 100"><rect width="100" height="100" rx="23" fill="#fdfdfd"/><rect x="21" y="21" width="58" height="58" rx="3" fill="#e9485d"/><path d="M43 20h17l20 20v20zM20 40v20l20 20h17z" fill="#fdfdfd"/></svg></div>
  <div class="app-ic"><svg viewBox="0 0 100 100"><rect width="100" height="100" rx="23" fill="#faf9f8"/><path d="M37 25h52M37 50h52M37 75h52" stroke="#b9b9b9" stroke-width="2"/><g fill="none" stroke-width="2"><circle cx="20" cy="25" r="7.500" stroke="#3478f0"/><circle cx="20" cy="50" r="7.500" stroke="#e5483a"/><circle cx="20" cy="75" r="7.500" stroke="#e99a3a"/></g><circle cx="20" cy="25" r="5" fill="#3478f0"/><circle cx="20" cy="50" r="5" fill="#e5483a"/><circle cx="20" cy="75" r="5" fill="#e99a3a"/></svg></div>
  <div class="app-ic"><svg viewBox="0 0 100 100"><rect width="100" height="100" rx="23" fill="url(#g-store)"/><g stroke="#fff" stroke-width="9" stroke-linecap="round"><path d="M55 22L32 62M26 74l-1.500 3M45 22l31 55M19 62h34M69 62h12"/></g></svg></div>
  <div class="app-ic run"><svg viewBox="0 0 100 100"><rect width="100" height="100" rx="23" fill="url(#g-set)"/><circle cx="50" cy="50" r="42" fill="#2a2a2c"/><circle cx="50" cy="50" r="38" fill="none" stroke="#9a9b9d" stroke-width="7" stroke-dasharray="2.500 1.500"/><circle cx="50" cy="50" r="29" fill="none" stroke="#a8a9ab" stroke-width="4"/><circle cx="50" cy="50" r="18" fill="none" stroke="#6f7072" stroke-width="5"/><path d="M50 50h28M50 50L36 26M50 50L36 74" stroke="#b8b9bb" stroke-width="5"/><circle cx="50" cy="50" r="7" fill="#2a2a2c" stroke="#b8b9bb" stroke-width="3"/></svg></div>
  <div class="app-ic run"><svg viewBox="0 0 100 100"><rect width="100" height="100" rx="23" fill="url(#g-gray)"/><rect x="29" y="7" width="42" height="86" rx="9" fill="#15161a"/><rect x="31.500" y="9.500" width="37" height="81" rx="7" fill="url(#g-phone)"/><path d="M68.500 34C52 42 50 60 46 74c-3 8-10 11-14.500 13 1 3 3 3.500 6 3.500h25c4 0 6-3 6-6z" fill="#16405f"/><path d="M68.500 34C54 40 48 54 44 66l24.500-8z" fill="#3796b0"/><path d="M32 85c10-8 12-24 14-36-6 6-13 14-14.500 20z" fill="#f0eef0"/><rect x="43" y="9" width="14" height="4" rx="2" fill="#111"/></svg></div>
  <i class="div"></i>
  <div class="app-ic run"><svg viewBox="0 0 100 100"><rect width="100" height="100" rx="23" fill="url(#g-green)"/><path d="M13 88l5-20A36 36 0 1 1 33 82z" fill="#fff"/><path d="M20.500 80.500l3.500-13A29.500 29.500 0 1 1 34 76.500z" fill="#6cd05c"/><path d="M38 33c-6 2-7 9-3 17 5 10 13 17 23 20 7 2 13-3 13-9 0-2-8-6-10-6-2 0-4 5-6 5-3 0-12-8-13-12 0-2 4-3 3-6-1-4-3-9-7-9z" fill="#fff"/></svg><em class="badge">261</em></div>
  <div class="app-ic run"><svg viewBox="0 0 100 100"><rect width="100" height="100" rx="23" fill="#fdfdfd"/><svg class="dock-lion" x="10" y="6" width="80" height="90" viewBox="0 0 64 72"><use href="#lion"/></svg></svg></div>
  <div class="app-ic run"><svg viewBox="0 0 100 100"><rect width="100" height="100" rx="23" fill="url(#g-disc)"/><svg x="13" y="14" width="74" height="74" viewBox="0 0 24 24"><path fill="#fff" d="M20.317 4.3698a19.7913 19.7913 0 0 0-4.8851-1.5152.0741.0741 0 0 0-.0785.0371c-.211.3753-.4447.8648-.6083 1.2495-1.8447-.2762-3.68-.2762-5.4868 0-.1636-.3933-.4058-.8742-.6177-1.2495a.077.077 0 0 0-.0785-.037 19.7363 19.7363 0 0 0-4.8852 1.515.0699.0699 0 0 0-.0321.0277C.5334 9.0458-.319 13.5799.0992 18.0578a.0824.0824 0 0 0 .0312.0561c2.0528 1.5076 4.0413 2.4228 5.9929 3.0294a.0777.0777 0 0 0 .0842-.0276c.4616-.6304.8731-1.2952 1.226-1.9942a.076.076 0 0 0-.0416-.1057c-.6528-.2476-1.2743-.5495-1.8722-.8923a.077.077 0 0 1-.0076-.1277c.1258-.0943.2517-.1923.3718-.2914a.0743.0743 0 0 1 .0776-.0105c3.9278 1.7933 8.18 1.7933 12.0614 0a.0739.0739 0 0 1 .0785.0095c.1202.099.246.1981.3728.2924a.077.077 0 0 1-.0066.1276 12.2986 12.2986 0 0 1-1.873.8914.0766.0766 0 0 0-.0407.1067c.3604.698.7719 1.3628 1.225 1.9932a.076.076 0 0 0 .0842.0286c1.961-.6067 3.9495-1.5219 6.0023-3.0294a.077.077 0 0 0 .0313-.0552c.5004-5.177-.8382-9.6739-3.5485-13.6604a.061.061 0 0 0-.0312-.0286zM8.02 15.3312c-1.1825 0-2.1569-1.0857-2.1569-2.419 0-1.3332.9555-2.4189 2.157-2.4189 1.2108 0 2.1757 1.0952 2.1568 2.419 0 1.3332-.9555 2.4189-2.1569 2.4189zm7.9748 0c-1.1825 0-2.1569-1.0857-2.1569-2.419 0-1.3332.9554-2.4189 2.1569-2.4189 1.2108 0 2.1757 1.0952 2.1568 2.419 0 1.3332-.946 2.4189-2.1568 2.4189Z"/></svg></svg><em class="badge">4611</em></div>
  <div class="app-ic run"><svg viewBox="0 0 100 100"><rect width="100" height="100" rx="23" fill="#fdfdfd"/><path d="M66 15L84 23v54L66 85z" fill="#4a9be8"/><path d="M66 15L14 61l5 7h4l43-33z" fill="#2a6cb5"/><path d="M66 85L14 39l5-7h4l43 33z" fill="#3b8ad6"/></svg></div>
  <div class="app-ic run"><svg viewBox="0 0 100 100"><rect width="100" height="100" rx="23" fill="url(#g-white)"/><circle cx="50" cy="50" r="43" fill="url(#g-tg)"/><path d="M23 50l46-19c3-1 4 0 3 3l-8 35c-1 2-3 2-5 1L46 60l-6 6-3-12z" fill="#fff"/><path d="M37 54l26-16-20 21-3 7z" fill="#b9d5e8"/></svg><em class="badge">201</em></div>
  <i class="div"></i>
  <svg class="trash" viewBox="0 0 68 90"><path d="M1 14l7 68c0 10 52 10 52 0l7-68z" fill="url(#g-trash)"/><ellipse cx="34" cy="14" rx="33" ry="10" fill="#55585a"/><path d="M8 16l6-13 10 4 6-6 8 5 8-6 6 8 8 1-2 10-12 4-8-5-10 6-8-5z" fill="#ececec"/><path d="M22 12l6-4 4 6-6 4z" fill="#58b0b0"/><path d="M42 8l8 3-2 8-7-3z" fill="#b0582e"/><path d="M34 6l3 12M16 8l4 12M52 6l-4 14" stroke="#55585a" stroke-width="1.500"/></svg>
</footer>
</body>
</html>
```
FILE: styles.css
```css
* { box-sizing: border-box; }
html, body { margin: 0; width: 2880px; height: 1800px; overflow: hidden; }
body { position: relative; font-family: Inter, "Liberation Sans", sans-serif; color: #101828; background: linear-gradient(90deg, #16240f, #152018 20%, #1a2112 42%, #221a12 62%, #2b2114 80%, #10181a 92%, #12201a); }
svg { display: block; flex: none; }
.defs { position: absolute; width: 0; height: 0; }
h1, h2, h3, p { margin: 0; font-weight: 400; }
i, em { font-style: normal; }
span, b, p, h2, small, strong { white-space: nowrap; }

/* menu bar */
.menubar { height: 48px; display: flex; align-items: center; padding-left: 38px; font-size: 26px; line-height: 46px; color: #fff; background: linear-gradient(90deg, #4b4c40, #48493c 50%, #45473a 75%, #3e4434); text-shadow: 0 2px 4px rgba(0,0,0,.25); }
.menubar-apple { width: 32px; height: 31px; fill: #fff; margin-top: -2px; }
.menus { display: grid; grid-template-columns: 113px 83px 89px 99px 128px 176px 133px 84px 138px auto; margin-left: 38px; font-weight: 500; letter-spacing: -.026em; }
.menus b { font-weight: 700; letter-spacing: -.006em; }
.status { margin-left: auto; display: flex; align-items: center; width: 720px; height: 48px; fill: #efefec; }
.st-badge { width: 40px; height: 36px; margin-top: 4px; }
.st-badge text { font: 500 19px Inter, sans-serif; text-anchor: middle; fill: #434638; }
.st-gpt { width: 31px; height: 31px; margin-left: 35px; }
.st-batt { width: 51px; height: 24px; margin-left: 34px; }
.st-wifi { width: 34px; height: 25px; margin-left: 38px; }
.st-search { width: 26px; height: 26px; margin-left: 40px; }
.st-cc { width: 27px; height: 27px; margin-left: 40px; }
.st-date { width: 152px; margin-left: 35px; font-weight: 500; letter-spacing: -.018em; }
.st-time { font-weight: 500; letter-spacing: -.03em; }

/* browser window */
.window { position: relative; margin-top: 2px; width: 2878px; height: 1610px; border-radius: 22px 22px 26px 26px; overflow: hidden; background: #1f2937; }
.window::after { content: ""; position: absolute; inset: 0; border-radius: inherit; box-shadow: inset 0 0 0 2px rgba(255,255,255,.24); }
.tabstrip { height: 80px; padding-left: 42px; display: flex; align-items: center; background: #1f1e23; font-size: 24px; letter-spacing: -.007em; color: #bcbbbf; }
.lights { width: 129px; display: flex; gap: 16px; }
.lights i { width: 24px; height: 24px; border-radius: 50%; }
.lights .red { background: #ec6a5e; }
.lights .amber { background: #f4bd4f; }
.lights .green { background: #61c554; }
.tab { width: 312px; height: 32px; padding-left: 27px; display: flex; align-items: center; gap: 16px; border-right: 2px solid #3a393e; }
.tab svg { width: 32px; height: 32px; }
.tab span { width: 218px; overflow: hidden; -webkit-mask-image: linear-gradient(90deg, #000 185px, transparent 218px); mask-image: linear-gradient(90deg, #000 185px, transparent 218px); }
.tab.last { border-color: transparent; }
.tab.active { width: 303px; height: 64px; margin-left: 3px; padding-left: 26px; gap: 18px; border: 0; border-radius: 16px; background: #343338; color: #fff; letter-spacing: -.015em; }
.tab.active svg { width: 28px; height: 28px; }
.tab.active span { width: 164px; -webkit-mask-image: linear-gradient(90deg, #000 125px, transparent 164px); mask-image: linear-gradient(90deg, #000 125px, transparent 164px); }
.tab.active .close { width: 16px; height: 16px; margin-left: 8px; }
.close, .plus, .chev { fill: none; stroke: #f2f2f4; stroke-width: 2.6; }
.plus { width: 22px; height: 22px; margin-left: 29px; }
.chev { width: 20px; height: 12px; margin-left: 119px; }

.ic { fill: none; stroke: #f2f2f4; stroke-width: 2.8; stroke-linejoin: round; stroke-linecap: round; }
.toolbar { height: 80px; padding-left: 35px; display: flex; align-items: center; background: #3b3a3f; }
.back { width: 18px; height: 32px; }
.fwd { width: 18px; height: 32px; margin-left: 43px; stroke: #77767b; }
.reload { width: 36px; height: 34px; margin-left: 33px; }
.bm { width: 26px; height: 34px; margin-left: 278px; }
.urlbar { width: 1472px; height: 64px; margin-left: 33px; padding-left: 19px; display: flex; align-items: center; border-radius: 16px; background: #252429; }
.tune { width: 26px; height: 24px; }
.url { width: 1172px; margin-left: 31px; font-size: 28px; color: #e8e8ea; }
.url em { color: #b5b5ba; letter-spacing: .016em; }
.share { width: 24px; height: 32px; margin-left: 32px; stroke: #c4c4c8; stroke-width: 2.2; }
.sep { width: 2px; height: 32px; margin-left: 20px; background: #a5a5a9; }
.lion { width: 32px; height: 36px; margin-left: 22px; }
.lion-shape { fill: #e8602c; }
.dock-lion .lion-shape { fill: url(#g-brave); }
.bat { width: 36px; height: 32px; margin-left: 34px; }
.exts { display: flex; margin-left: 166px; }
.exts span { width: 60px; height: 36px; display: flex; align-items: center; justify-content: center; }
.exts svg { width: 32px; height: 32px; }
.exts svg.wide { width: 34px; height: 34px; }
.exts .dl { width: 52px; margin-right: 4px; }
.update { width: 158px; height: 56px; margin-left: 8px; padding-left: 15px; display: flex; align-items: center; border: 2px solid #f3b0ad; border-radius: 16px; background: #4a4144; color: #f3b0ad; font-size: 26px; letter-spacing: -.02em; }
.update span { width: 96px; }
.update i { width: 33px; height: 26px; border-top: 3px solid; border-bottom: 3px solid; background: linear-gradient(currentColor, currentColor) center / 100% 3px no-repeat; }

.bookmarks { height: 70px; padding: 0 29px 10px 35px; display: flex; align-items: center; background: #3b3a3f; border-bottom: 2px solid #2f2e33; font-size: 24px; color: #fff; font-weight: 500; letter-spacing: -.014em; }
.grid { width: 34px; height: 34px; }
.vsep { width: 4px; height: 32px; margin-left: 27px; border-radius: 2px; background: #232227; }
.allb { width: 32px; height: 32px; margin-left: 28px; }
.bm-name { margin-left: 12px; }
.vsep.right { margin-left: auto; }
.folder { width: 30px; height: 26px; margin: 2px 13px 0 29px; }

/* application */
.app { display: flex; width: 2876px; height: 1380px; }
.lu { fill: none; stroke: currentColor; stroke-width: 2; stroke-linecap: round; stroke-linejoin: round; }
.s32 { width: 32px; height: 32px; }
.s40 { width: 40px; height: 40px; }
.s64 { width: 64px; height: 64px; }
.s128 { width: 128px; height: 128px; }
.sidebar { width: 512px; display: flex; flex-direction: column; background: #fff; border-right: 2px solid #e5e7eb; }
.brand { height: 258px; padding: 48px 64px 0 48px; display: flex; justify-content: space-between; border-bottom: 2px solid #e5e7eb; }
.brand h1 { padding-top: 1px; font-size: 40px; line-height: 56px; font-weight: 700; letter-spacing: -.0235em; }
.brand p { margin-top: 7px; font-size: 28px; line-height: 40px; letter-spacing: -.0115em; color: #4b5563; }
.brand svg { margin-top: 64px; }
.nav { flex: 1; padding: 32px 32px 0; }
.nav a { height: 96px; padding: 0 32px; display: flex; align-items: center; gap: 24px; border-radius: 16px; font-size: 32px; font-weight: 500; letter-spacing: -.0215em; color: #4b5563; }
.nav span { padding-top: 1px; }
.nav a.on { background: #4f80ee; color: #fff; box-shadow: 0 8px 12px -2px rgba(0,0,0,.1), 0 4px 8px -4px rgba(0,0,0,.1); }
.nav b { margin-left: auto; height: 48px; padding: 0 16px; border-radius: 24px; font-size: 24px; line-height: 49px; font-weight: 500; letter-spacing: 0; color: #2a41a8; background: #dfe9fb; }
.profile { padding: 32px; border-top: 2px solid #e5e7eb; }
.pcard { padding: 32px; border-radius: 16px; background: #f9fafc; }
.pcard small { display: block; padding-top: 1px; font-size: 24px; line-height: 31px; letter-spacing: -.004em; color: #4b5563; }
.prow { display: flex; align-items: center; gap: 24px; margin-bottom: 24px; color: #4b5563; }
.prow strong { display: block; font-size: 28px; line-height: 40px; font-weight: 500; letter-spacing: -.008em; color: #101828; }
.bar { height: 16px; border-radius: 8px; margin-bottom: 16px; background: #1f293b; }

.page { flex: 1; margin-right: 10px; background: #f9fafc; overflow: hidden; }
.phead { position: relative; height: 210px; padding: 48px; display: flex; justify-content: space-between; background: #fff; border-bottom: 2px solid #e5e7eb; box-shadow: 0 2px 4px rgba(0,0,0,.05); }
.ptitle { display: flex; gap: 24px; color: #dfb13c; }
.ptitle h2 { padding-top: 1px; font-size: 48px; line-height: 63px; font-weight: 700; letter-spacing: -.028em; color: #101828; }
.phead p { padding-top: 1px; font-size: 32px; line-height: 48px; letter-spacing: -.0203em; color: #4b5563; }
.figures { display: flex; gap: 32px; text-align: center; }
.figures span { display: block; padding-top: 1px; font-size: 28px; line-height: 39px; letter-spacing: -.0175em; color: #9ca3af; }
.figures b { display: block; padding-top: 1px; font-size: 58px; line-height: 71px; }
.blue { color: #4a92ec; }
.yellow { color: #f2cd48; }
.content { padding: 48px; display: flex; flex-direction: column; gap: 48px; }
.level { height: 356px; padding: 52px 48px 0; border: 2px solid #e5e7eb; border-radius: 16px; background: #fff; box-shadow: 0 2px 4px rgba(0,0,0,.05); }
.crown { color: #f2cd48; }
.lrow { margin-top: 52px; height: 104px; display: flex; align-items: flex-end; justify-content: space-between; color: #9ca3af; text-align: right; }
.lrow p { font-size: 32px; line-height: 46px; letter-spacing: -.0171em; }
.lrow b { display: block; padding-top: 1px; font-size: 47px; line-height: 63px; color: #4a92ec; }
.lrow span { display: block; padding-top: 1px; font-size: 28px; line-height: 39px; letter-spacing: -.016em; }
.big { height: 24px; margin: 32px 0 0; border-radius: 12px; }
.stats { display: grid; grid-template-columns: repeat(4, 1fr); gap: 48px; }
.stat { height: 236px; padding: 46px; padding-left: 48px; padding-right: 48px; display: flex; justify-content: space-between; border: 2px solid #343e4d; border-radius: 16px; background: #212936; box-shadow: 0 2px 4px rgba(0,0,0,.06); }
.stat > div { padding-top: 2px; }
.stat span { display: block; padding-top: 1px; font-size: 28px; line-height: 40px; letter-spacing: -.0155em; color: #9ca3af; }
.stat b { display: block; font-size: 47px; line-height: 63px; }
.stat small { display: block; padding-top: 1px; font-size: 24px; line-height: 31px; letter-spacing: -.002em; color: #6b7280; }
.stat svg { margin-top: 38px; }
.stat.y { color: #f2cd48; }
.stat.y svg { margin-top: 22px; }
.stat.g { color: #4ba556; }
.stat.b { color: #6aa3f5; }
.stat.p { color: #b584f5; }
.segs { height: 80px; padding: 8px; display: grid; grid-template-columns: repeat(3, 1fr); border-radius: 12px; background: #212936; }
.segs span { text-align: center; line-height: 65px; height: 64px; font-size: 28px; font-weight: 500; letter-spacing: -.008em; color: #94a3b8; border-radius: 8px; }
.segs .on { background: #4a92ec; color: #fff; }
.empty { height: 400px; padding-top: 96px; display: flex; flex-direction: column; align-items: center; gap: 32px; border: 2px solid #343e4d; border-radius: 16px; background: #212936; color: #6b7280; }
.empty h3 { font-size: 36px; line-height: 57px; font-weight: 500; letter-spacing: -.0273em; color: #c9ccd1; }

/* dock floats over the desktop and the window's lower edge */
.wall { position: absolute; left: 0; top: 1660px; opacity: .55; z-index: -1; }
.dock { position: absolute; left: 88px; top: 1664px; width: 2706px; height: 126px; padding: 17px 0 0 15px; display: flex; gap: 26.1px; border: 2px solid #454c41; border-radius: 40px; background: linear-gradient(90deg, #232c22, #1f2624 15%, #26301f 30%, #2b3420 40%, #232320 48%, #241f1a 60%, #2b2018 66%, #232a22 72%, #252b25 83%, #45331f 91%, #2b2621 96%, #242321); box-shadow: 0 0 60px rgba(0,0,0,.28); }
.app-ic { position: relative; width: 78px; height: 78px; }
.app-ic > svg { width: 78px; height: 78px; overflow: visible; filter: drop-shadow(0 1px 2px rgba(0,0,0,.4)); }
.app-ic.run::after { content: ""; position: absolute; left: 35px; top: 95px; width: 8px; height: 8px; border-radius: 50%; background: #a9b0a6; }
.petals ellipse { mix-blend-mode: multiply; opacity: .9; }
.badge { position: absolute; right: -13px; top: -10px; min-width: 38px; height: 38px; padding: 0 5px; border-radius: 19px; background: #dc4c3d; color: #fff; font-size: 20px; line-height: 38px; text-align: center; letter-spacing: -.04em; }
.cal-m { font: 600 20px Inter, sans-serif; fill: #fff; text-anchor: middle; }
.cal-d { font: 300 58px Inter, sans-serif; fill: #222; text-anchor: middle; letter-spacing: -.03em; }
.tv { font: 500 44px Inter, sans-serif; fill: #fff; text-anchor: middle; letter-spacing: -.04em; }
.div { width: 2px; height: 94px; margin: -4px 6px 0 11px; background: #555a52; }
.div ~ .div { margin-right: 13px; }
.trash { width: 68px; height: 90px; margin-top: -8px; }
```
